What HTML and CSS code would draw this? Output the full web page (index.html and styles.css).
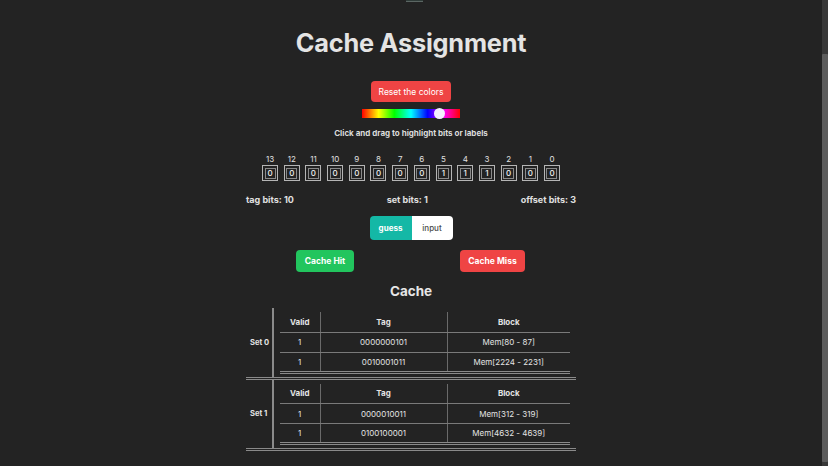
FILE: index.html
```html
<!DOCTYPE html>
<html lang="en">
<head>
<meta charset="UTF-8">
<meta name="viewport" content="width=device-width, initial-scale=1">
<title>Cache Assignment</title>
<link rel="stylesheet" href="styles.css">
</head>
<body>
<div class="topnub"></div>
<div class="fake-scroll"><div class="fake-thumb"></div></div>

<main class="page">
	<h1 class="title">Cache Assignment</h1>

	<button class="btn btn-reset">Reset the colors</button>
	<div class="hue">
		<span class="hue-thumb"></span>
	</div>
	<p class="hint">Click and drag to highlight bits or labels</p>

	<div class="bits">
		<div class="bit"><span class="idx">13</span><span class="box"><span>0</span></span></div>
		<div class="bit"><span class="idx">12</span><span class="box"><span>0</span></span></div>
		<div class="bit"><span class="idx">11</span><span class="box"><span>0</span></span></div>
		<div class="bit"><span class="idx">10</span><span class="box"><span>0</span></span></div>
		<div class="bit"><span class="idx">9</span><span class="box"><span>0</span></span></div>
		<div class="bit"><span class="idx">8</span><span class="box"><span>0</span></span></div>
		<div class="bit"><span class="idx">7</span><span class="box"><span>0</span></span></div>
		<div class="bit"><span class="idx">6</span><span class="box"><span>0</span></span></div>
		<div class="bit"><span class="idx">5</span><span class="box"><span>1</span></span></div>
		<div class="bit"><span class="idx">4</span><span class="box"><span>1</span></span></div>
		<div class="bit"><span class="idx">3</span><span class="box"><span>1</span></span></div>
		<div class="bit"><span class="idx">2</span><span class="box"><span>0</span></span></div>
		<div class="bit"><span class="idx">1</span><span class="box"><span>0</span></span></div>
		<div class="bit"><span class="idx">0</span><span class="box"><span>0</span></span></div>
	</div>

	<div class="counts">
		<span>tag bits: 10</span>
		<span>set bits: 1</span>
		<span>offset bits: 3</span>
	</div>

	<div class="mode">
		<span class="mode-on">guess</span>
		<span class="mode-off">input</span>
	</div>

	<div class="answers">
		<button class="btn btn-hit">Cache Hit</button>
		<button class="btn btn-miss">Cache Miss</button>
	</div>

	<h2 class="cache-title">Cache</h2>

	<table class="cache">
		<tr class="set">
			<th class="set-name">Set 0</th>
			<td class="set-body">
				<table class="lines">
					<tr><th class="c-valid">Valid</th><th class="c-tag">Tag</th><th class="c-block">Block</th></tr>
					<tr><td>1</td><td>0000000101</td><td>Mem[80 - 87]</td></tr>
					<tr><td>1</td><td>0010001011</td><td>Mem[2224 - 2231]</td></tr>
				</table>
			</td>
		</tr>
		<tr class="set">
			<th class="set-name">Set 1</th>
			<td class="set-body">
				<table class="lines">
					<tr><th class="c-valid">Valid</th><th class="c-tag">Tag</th><th class="c-block">Block</th></tr>
					<tr><td>1</td><td>0000010011</td><td>Mem[312 - 319]</td></tr>
					<tr><td>1</td><td>0100100001</td><td>Mem[4632 - 4639]</td></tr>
				</table>
			</td>
		</tr>
	</table>
</main>
</body>
</html>
```

FILE: styles.css
```css
*,
*::before,
*::after {
	margin: 0;
	padding: 0;
	box-sizing: border-box;
}
HTML, BODY {
	width: 100%;
	height: 100%;
	overflow: hidden;
}
BODY {
	background-color: #232323;
	color: #e6e6e6;
	font-family: Inter, "Liberation Sans", sans-serif;
	padding-right: 6px;	/* room for the scrollbar strip */
}

/* leftover bit of the header, cut off at the top */
.topnub {
	position: absolute;
	left: 406px;
	top: 0;
	width: 17px;
	height: 2px;
	background: #2f3b38;
	border-bottom: 1px solid #5b6663;
}
.fake-scroll {
	position: fixed;
	top: 0;
	right: 0;
	width: 6px;
	height: 100%;
	background: #383838;
}
.fake-thumb {
	margin-top: 54px;
	height: 408px;
	background: #5c5c5c;
	border-radius: 1px;
}

.page {
	width: 330px;
	margin: 0 auto;
	padding-top: 27px;
	display: flex;
	flex-direction: column;
	align-items: center;
}

.title {
	font-size: 25.3px;
	font-weight: 700;
	color: #e4e4e4;
	letter-spacing: -0.2px;
	line-height: 32px;
}

.btn {
	border: none;
	border-radius: 4px;
	color: #fff;
	font-family: inherit;
	cursor: pointer;
}
.btn-reset {
	margin-top: 22px;
	width: 80px;
	height: 21px;
	background: #ef4444;
	font-size: 8.5px;
}

.hue {
	position: relative;
	margin-top: 7px;
	width: 98px;
	height: 9px;
	background: linear-gradient(to right, #ff0000, #ffff00 17%, #00ff00 33%, #00ffff 50%, #0000ff 67%, #ff00ff 83%, #ff0000);
}
.hue-thumb {
	position: absolute;
	left: 72px;
	top: -1px;
	width: 11px;
	height: 11px;
	border-radius: 50%;
	background: #f4f0ff;
}

.hint {
	margin-top: 10px;
	font-size: 8px;
	font-weight: 700;
	color: #dcdcdc;
}

.bits {
	margin-top: 16px;
	display: flex;
	gap: 5.7px;
}
.bit {
	display: flex;
	flex-direction: column;
	align-items: center;
	width: 16px;
}
.idx {
	font-size: 8px;
	line-height: 10px;
	color: #e0e0e0;
}
.box {
	margin-top: 1px;
	width: 16px;
	height: 16px;
	border: 1.5px solid #b5b5b5;
	display: flex;
	align-items: center;
	justify-content: center;
}
.box span {
	width: 11px;
	height: 11px;
	border: 1px solid #8a8a8a;
	font-size: 8px;
	font-weight: 500;
	line-height: 9px;
	text-align: center;
	color: #f0f0f0;
}

.counts {
	align-self: stretch;
	margin-top: 13px;
	display: flex;
	justify-content: space-between;
	font-size: 9px;
	font-weight: 700;
	color: #e0e0e0;
}

.mode {
	margin-top: 11px;
	display: flex;
	width: 83px;
	height: 24px;
	border-radius: 4px;
	overflow: hidden;
	font-size: 8px;
	line-height: 24px;
	text-align: center;
}
.mode-on {
	flex: 0 0 42px;
	background: #14b8a6;
	color: #fff;
	font-weight: 700;
}
.mode-off {
	flex: 1;
	background: #fff;
	color: #4a4a4a;
	font-weight: 500;
}

.answers {
	align-self: stretch;
	margin-top: 10px;
	display: flex;
	justify-content: space-between;
	padding: 0 51px 0 50px;
}
.btn-hit, .btn-miss {
	height: 22px;
	font-size: 8.5px;
	font-weight: 700;
}
.btn-hit {
	width: 58px;
	background: #22c55e;
}
.btn-miss {
	width: 65px;
	background: #ef4444;
}

.cache-title {
	margin-top: 11px;
	font-size: 13.5px;
	font-weight: 700;
	color: #e6e6e6;
	line-height: 17px;
}

.cache {
	margin-top: 8px;
	width: 330px;
	border-collapse: collapse;
	font-size: 8px;
	color: #e4e4e4;
}
.set {
	border-bottom: 3px double #8a8a8a;
}
.set-name {
	width: 27px;
	font-size: 7.6px;
	font-weight: 700;
	text-align: left;
	padding-left: 4px;
	white-space: nowrap;
	border-right: 2px solid #8a8a8a;
}
.set-body {
	padding: 4px 6px 3px 6px;
}
.lines {
	width: 100%;
	border-collapse: collapse;
	border-bottom: 3px double #8a8a8a;
}
.lines th, .lines td {
	height: 20px;
	text-align: center;
	border-bottom: 1px solid #7a7a7a;
}
.lines tr:last-child td {
	border-bottom: none;
}
.lines th {
	font-weight: 700;
}
.lines td + td, .lines th + th {
	border-left: 1px solid #6a6a6a;
}
.c-valid { width: 40px; }
.c-tag { width: 127px; }
```
